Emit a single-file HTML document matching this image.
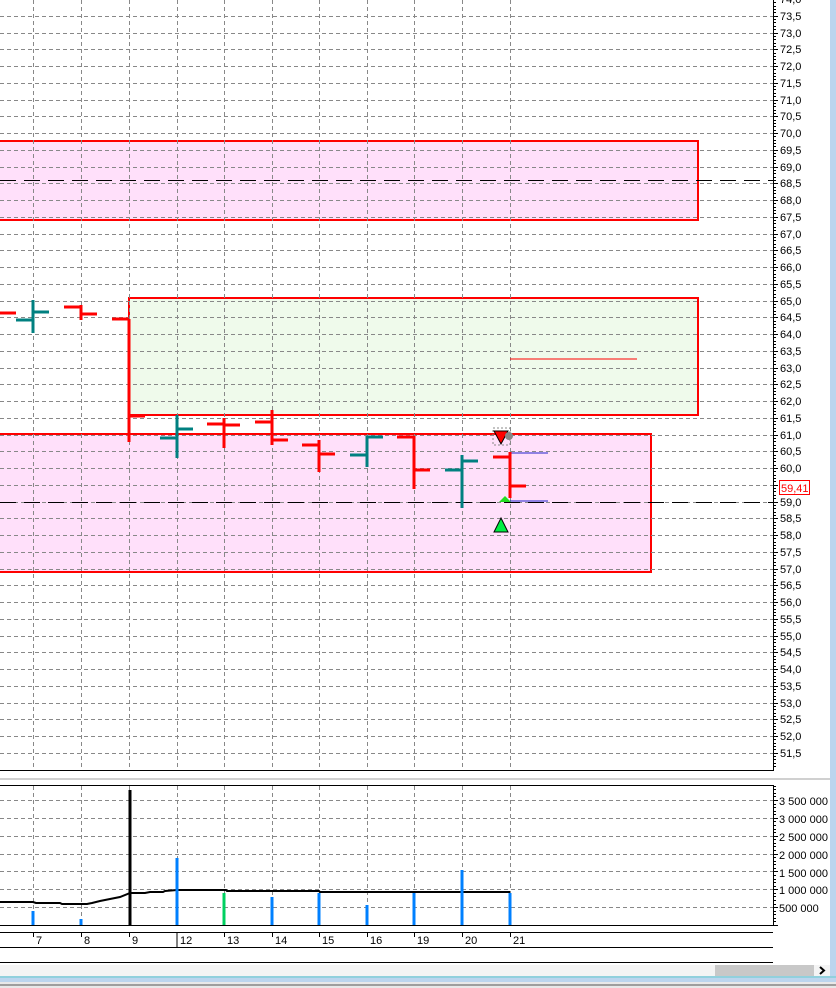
<!DOCTYPE html>
<html><head><meta charset="utf-8"><style>
html,body{margin:0;padding:0;background:#fff;width:836px;height:988px;overflow:hidden}
svg{display:block;font-family:"Liberation Sans",sans-serif;font-size:11px}
</style></head><body>
<svg id="s" width="836" height="988" xmlns="http://www.w3.org/2000/svg">
<rect x="0" y="0" width="836" height="988" fill="#fff"/>
<g id="grid"></g>
<rect x="-2" y="141" width="700" height="79" fill="#ffe0fa" stroke="#f00" stroke-width="2"/>
<rect x="129" y="298" width="569" height="117" fill="#effaeb" stroke="#f00" stroke-width="2"/>
<rect x="-2" y="434" width="653" height="138" fill="#ffe0fa" stroke="#f00" stroke-width="2"/>
<g id="grid2"></g>
<line x1="0" y1="180.5" x2="773" y2="180.5" stroke="#000" stroke-dasharray="16,8"/>
<line x1="0" y1="502.5" x2="773" y2="502.5" stroke="#000" stroke-dasharray="16,8"/>
<line x1="510" y1="359" x2="637" y2="359" stroke="#f00" stroke-width="1"/>
<line x1="510" y1="453" x2="548" y2="453" stroke="#22c" stroke-width="1"/>
<line x1="510" y1="501" x2="548" y2="501" stroke="#22c" stroke-width="1"/>
<g id="bars" stroke-width="3"></g>
<rect x="493" y="428" width="17" height="17" fill="none" stroke="#888" stroke-dasharray="2,2"/>
<polygon points="494,431 508,431 501,444" fill="#f00" stroke="#000" stroke-width="1"/>
<circle cx="509" cy="436" r="4" fill="#888"/>
<polygon points="501,518 508,532 494,532" fill="#0e4" stroke="#000" stroke-width="1"/>
<polygon points="505,496 511,502 499,502" fill="#2d2"/>
<line x1="0" y1="770.5" x2="773" y2="770.5" stroke="#000"/>
<line x1="773.5" y1="0" x2="773.5" y2="771" stroke="#000"/>
<g id="ticks" stroke="#000"></g>
<g fill="#000">
<text x="780" y="3">74,0</text><text x="780" y="20">73,5</text><text x="780" y="37">73,0</text><text x="780" y="53">72,5</text><text x="780" y="70">72,0</text><text x="780" y="87">71,5</text><text x="780" y="104">71,0</text><text x="780" y="120">70,5</text><text x="780" y="137">70,0</text><text x="780" y="154">69,5</text><text x="780" y="171">69,0</text><text x="780" y="187">68,5</text><text x="780" y="204">68,0</text><text x="780" y="221">67,5</text><text x="780" y="238">67,0</text><text x="780" y="254">66,5</text><text x="780" y="271">66,0</text><text x="780" y="288">65,5</text><text x="780" y="305">65,0</text><text x="780" y="321">64,5</text><text x="780" y="338">64,0</text><text x="780" y="355">63,5</text><text x="780" y="372">63,0</text><text x="780" y="388">62,5</text><text x="780" y="405">62,0</text><text x="780" y="422">61,5</text><text x="780" y="439">61,0</text><text x="780" y="455">60,5</text><text x="780" y="472">60,0</text><text x="780" y="489">59,5</text><text x="780" y="506">59,0</text><text x="780" y="522">58,5</text><text x="780" y="539">58,0</text><text x="780" y="556">57,5</text><text x="780" y="573">57,0</text><text x="780" y="589">56,5</text><text x="780" y="606">56,0</text><text x="780" y="623">55,5</text><text x="780" y="640">55,0</text><text x="780" y="656">54,5</text><text x="780" y="673">54,0</text><text x="780" y="690">53,5</text><text x="780" y="707">53,0</text><text x="780" y="723">52,5</text><text x="780" y="740">52,0</text><text x="780" y="757">51,5</text>
</g>
<rect x="779.5" y="480.5" width="30" height="14" fill="#fff" stroke="#f00"/>
<text x="781" y="492" fill="#f00">59,41</text>
<line x1="0" y1="779" x2="836" y2="779" stroke="#a0a0a0" stroke-width="1"/>
<g id="vgrid"></g>
<polyline points="0,902 33,902 36,903 60,903 62,904 87,904 92,903 100,901 110,899 120,897 130,893 145,893 150,892 163,892 165,891 177,890 226,890 227,891 319,891 320,892 510,892" fill="none" stroke="#000" stroke-width="2"/>
<line x1="130" y1="790" x2="130" y2="925" stroke="#000" stroke-width="3"/>
<g stroke="#0080ff" stroke-width="3">
<line x1="33" y1="911" x2="33" y2="925"/><line x1="81" y1="919" x2="81" y2="925"/><line x1="177" y1="858" x2="177" y2="925"/><line x1="272" y1="897" x2="272" y2="925"/><line x1="319" y1="893" x2="319" y2="925"/><line x1="367" y1="905" x2="367" y2="925"/><line x1="414" y1="893" x2="414" y2="925"/><line x1="462" y1="870" x2="462" y2="925"/><line x1="510" y1="893" x2="510" y2="925"/>
</g>
<line x1="224" y1="893" x2="224" y2="925" stroke="#00d060" stroke-width="3"/>
<rect x="-1" y="785.5" width="774.5" height="140" fill="none" stroke="#000"/>
<g id="vticks" stroke="#000"></g>
<g fill="#000">
<text x="779" y="805">3 500 000</text><text x="779" y="823">3 000 000</text><text x="779" y="841">2 500 000</text><text x="779" y="859">2 000 000</text><text x="779" y="877">1 500 000</text><text x="779" y="894">1 000 000</text><text x="779" y="912">500 000</text>
</g>
<line x1="0" y1="932.5" x2="773" y2="932.5" stroke="#000"/>
<line x1="0" y1="947.5" x2="773" y2="947.5" stroke="#000"/>
<line x1="0" y1="962.5" x2="773" y2="962.5" stroke="#000"/>
<line x1="177" y1="932" x2="177" y2="947" stroke="#000"/>
<g stroke="#000">
<line x1="33.5" y1="933" x2="33.5" y2="937"/><line x1="81.5" y1="933" x2="81.5" y2="937"/><line x1="129.5" y1="933" x2="129.5" y2="937"/><line x1="224.5" y1="933" x2="224.5" y2="937"/><line x1="272.5" y1="933" x2="272.5" y2="937"/><line x1="319.5" y1="933" x2="319.5" y2="937"/><line x1="367.5" y1="933" x2="367.5" y2="937"/><line x1="414.5" y1="933" x2="414.5" y2="937"/><line x1="462.5" y1="933" x2="462.5" y2="937"/><line x1="510.5" y1="933" x2="510.5" y2="937"/>
</g>
<g fill="#000">
<text x="36" y="944">7</text><text x="84" y="944">8</text><text x="132" y="944">9</text><text x="180" y="944">12</text><text x="227" y="944">13</text><text x="275" y="944">14</text><text x="322" y="944">15</text><text x="370" y="944">16</text><text x="417" y="944">19</text><text x="465" y="944">20</text><text x="513" y="944">21</text>
</g>
<rect x="0" y="965" width="830" height="11" fill="#f4f4f4"/>
<rect x="715" y="965" width="99" height="11" fill="#c8c8c8"/>
<polyline points="820,967 824,970.5 820,974" fill="none" stroke="#000" stroke-width="2"/>
<rect x="830" y="0" width="6" height="978" fill="#bcd5ee"/>
<rect x="0" y="976" width="836" height="6" fill="#bcd5ee"/>
<line x1="0" y1="977" x2="836" y2="977" stroke="#6cc" stroke-width="1"/>
<rect x="0" y="982" width="836" height="6" fill="#e8e8e8"/>
<line x1="0" y1="985" x2="836" y2="985" stroke="#555"/>
</svg>
<script>
var NS="http://www.w3.org/2000/svg";
function L(g,x1,y1,x2,y2,a){var l=document.createElementNS(NS,"line");l.setAttribute("x1",x1);l.setAttribute("y1",y1);l.setAttribute("x2",x2);l.setAttribute("y2",y2);for(var k in a)l.setAttribute(k,a[k]);g.appendChild(l);}
var xs=[33,81,129,177,224,272,319,367,414,462,510];
var gd={stroke:"#888","stroke-dasharray":"4,3","stroke-width":1};
var g=document.getElementById("grid2");
for(var k=0;k<46;k++){var y=Math.round(-1+16.75*k)+0.5;L(g,0,y,773,y,gd);}
xs.forEach(function(x){L(g,x+0.5,0,x+0.5,770,gd);});
var t=document.getElementById("ticks");
for(var k=0;k<230;k++){var y=Math.round(-1+3.35*k)+0.5;if(y>770)break;L(t,773,y,k%5==0?778:776,y,{});}
var vg=document.getElementById("vgrid");
for(var k=1;k<=7;k++){var y=Math.round(925-17.86*k)+0.5;L(vg,0,y,773,y,gd);}
xs.forEach(function(x){L(vg,x+0.5,786,x+0.5,925,gd);});
var vt=document.getElementById("vticks");
for(var k=0;k<40;k++){var y=Math.round(925-3.572*k)+0.5;if(y<786)break;L(vt,773,y,k%5==0?778:776,y,{});}
var b=document.getElementById("bars");
var R="#f00",T="#008080";
var bars=[[0,R,313,313,313,313],[33,T,300,333,320,312],[81,R,305,320,307,314],[129,R,319,442,319,416],[177,T,415,458,438,429],[224,R,418,448,424,425],[272,R,410,445,422,440],[319,R,440,472,445,454],[367,T,436,467,455,437],[414,R,436,489,437,470],[462,T,455,508,470,461],[510,R,452,498,457,486]];
bars.forEach(function(a){var x=a[0],c=a[1];var s={stroke:c,"stroke-width":3};
if(a[2]!=a[3])L(b,x,a[2],x,a[3],s);
L(b,x-17,a[4],x,a[4],s);L(b,x,a[5],x+16,a[5],s);});
</script>
</body></html>
